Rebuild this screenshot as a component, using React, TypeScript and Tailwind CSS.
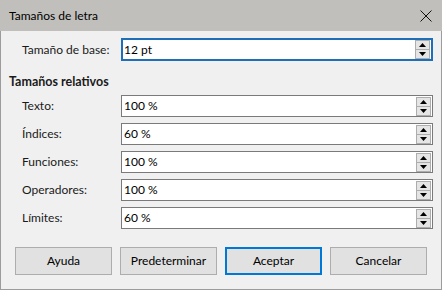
import React from 'react';

const rows = [
  { label: 'Texto:', value: '100 %' },
  { label: 'Índices:', value: '60 %' },
  { label: 'Funciones:', value: '100 %' },
  { label: 'Operadores:', value: '100 %' },
  { label: 'Límites:', value: '60 %' },
];

const Spin: React.FC = () => (
  <div className="flex flex-col w-[15px] h-[19px]">
    <div className="flex-1 flex items-center justify-center bg-[#e5e5e5] border border-[#adadad]">
      <svg width="7" height="4" viewBox="0 0 7 4">
        <path d="M0 4 L3.5 0 L7 4 Z" fill="#000" />
      </svg>
    </div>
    <div className="flex-1 flex items-center justify-center bg-[#e5e5e5] border border-t-0 border-[#adadad]">
      <svg width="7" height="4" viewBox="0 0 7 4">
        <path d="M0 0 L7 0 L3.5 4 Z" fill="#000" />
      </svg>
    </div>
  </div>
);

const SpinField: React.FC<{ value: string; focused?: boolean }> = ({ value, focused }) => (
  <div
    className={
      focused
        ? 'w-[312px] h-[23px] bg-white border-2 border-[#1f6fb8] flex items-center justify-between pl-[1px] pr-[1px]'
        : 'w-[312px] h-[22px] bg-white border border-[#7a7a7a] flex items-center justify-between pl-[2px] pr-[1px]'
    }
  >
    <span className="text-[12px] leading-none text-black">{value}</span>
    <Spin />
  </div>
);

const Button: React.FC<{ label: string; primary?: boolean }> = ({ label, primary }) => (
  <div
    className={
      primary
        ? 'w-[97px] h-[28px] flex items-center justify-center bg-[#e1e1e1] border-2 border-[#0078d7] text-[12px] text-black'
        : 'w-[97px] h-[28px] flex items-center justify-center bg-[#e1e1e1] border border-[#adadad] text-[12px] text-black'
    }
  >
    {label}
  </div>
);

export default function App() {
  return (
    <div
      className="w-[442px] h-[290px] flex flex-col overflow-hidden"
      style={{ fontFamily: 'Lato, "Noto Sans", sans-serif' }}
    >
      <div className="h-[31px] bg-[#c0bfbb] flex items-center justify-between pl-[9px] pr-[10px]">
        <span className="text-[12px] text-black">Tamaños de letra</span>
        <svg width="12" height="12" viewBox="0 0 12 12">
          <path d="M0.5 0.5 L11.5 11.5 M11.5 0.5 L0.5 11.5" stroke="#111" strokeWidth="1" />
        </svg>
      </div>
      <div className="flex-1 bg-[#f0f0f0] border-x border-b border-[#9c9c9c] flex flex-col">
        <div className="flex items-center pl-[21px] mt-[7px]">
          <span className="w-[99px] text-[12px] text-[#1a1a1a]">Tamaño de base:</span>
          <SpinField value="12 pt" focused />
        </div>
        <div className="pl-[8px] mt-[13px] h-[16px] text-[12.5px] font-bold leading-[16px] text-[#1a1a1a]">
          Tamaños relativos
        </div>
        <div className="flex flex-col gap-[6px] mt-[5px]">
          {rows.map((r) => (
            <div key={r.label} className="flex items-center pl-[21px]">
              <span className="w-[99px] text-[12px] text-[#1a1a1a]">{r.label}</span>
              <SpinField value={r.value} />
            </div>
          ))}
        </div>
        <div className="flex gap-[8px] pl-[14px] mt-[18px]">
          <Button label="Ayuda" />
          <Button label="Predeterminar" />
          <Button label="Aceptar" primary />
          <Button label="Cancelar" />
        </div>
      </div>
    </div>
  );
}
